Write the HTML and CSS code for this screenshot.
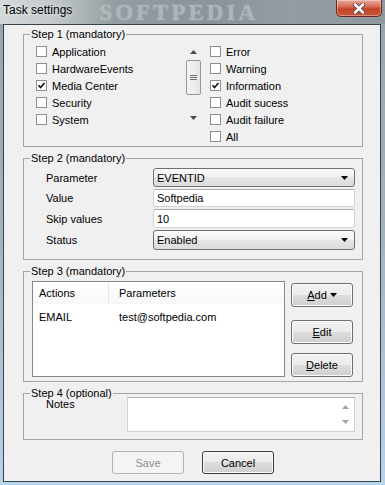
FILE: index.html
```html
<!DOCTYPE html>
<html lang="en">
  <head>
    <meta charset="UTF-8" />
    <meta name="viewport" content="width=device-width, initial-scale=1.0" />
    <title>Task settings</title>
    <link rel="stylesheet" href="styles.css">
  </head>
  <body>
    <div class="window">
      <div class="titlebar">
        <span class="title">Task settings</span>
        <span class="watermark">SOFTPEDIA</span>
        <button class="close-button" aria-label="Close">
          <svg width="14" height="11" viewBox="0 0 14 11">
            <path d="M3 1.5 L11 9.5 M11 1.5 L3 9.5" stroke="#5b3a36" stroke-width="4.2" stroke-linecap="round" fill="none" />
            <path d="M3 1.5 L11 9.5 M11 1.5 L3 9.5" stroke="#ffffff" stroke-width="2.6" stroke-linecap="round" fill="none" />
          </svg>
        </button>
      </div>

      <div class="client">
        <!-- Step 1 -->
        <fieldset class="group">
          <legend>Step 1 (mandatory)</legend>
          <div class="step1-body">
            <div class="checklist checklist-left">
              <div class="check-row"><span class="box"></span>Application</div>
              <div class="check-row"><span class="box"></span>HardwareEvents</div>
              <div class="check-row">
                <span class="box">
                  <svg width="9" height="9" viewBox="0 0 9 9"><path d="M1.5 4.3 L3.5 6.6 L7.5 2" stroke="#111" stroke-width="1.6" fill="none" /></svg>
                </span>Media Center
              </div>
              <div class="check-row"><span class="box"></span>Security</div>
              <div class="check-row"><span class="box"></span>System</div>
            </div>

            <div class="vscroll">
              <div class="scroll-arrow">
                <svg width="7" height="4" viewBox="0 0 7 4"><polygon points="0,4 3.5,0 7,4" fill="#4a4a4a" /></svg>
              </div>
              <div class="scroll-thumb">
                <span class="grip"></span><span class="grip"></span><span class="grip"></span>
              </div>
              <div class="scroll-track"></div>
              <div class="scroll-arrow">
                <svg width="7" height="4" viewBox="0 0 7 4"><polygon points="0,0 7,0 3.5,4" fill="#4a4a4a" /></svg>
              </div>
            </div>

            <div class="checklist checklist-right">
              <div class="check-row"><span class="box"></span>Error</div>
              <div class="check-row"><span class="box"></span>Warning</div>
              <div class="check-row">
                <span class="box">
                  <svg width="9" height="9" viewBox="0 0 9 9"><path d="M1.5 4.3 L3.5 6.6 L7.5 2" stroke="#111" stroke-width="1.6" fill="none" /></svg>
                </span>Information
              </div>
              <div class="check-row"><span class="box"></span>Audit sucess</div>
              <div class="check-row"><span class="box"></span>Audit failure</div>
              <div class="check-row"><span class="box"></span>All</div>
            </div>
          </div>
        </fieldset>

        <!-- Step 2 -->
        <fieldset class="group">
          <legend>Step 2 (mandatory)</legend>
          <div class="step2-body">
            <span class="field-label">Parameter</span>
            <div class="combo">
              <span>EVENTID</span>
              <svg width="7" height="4" viewBox="0 0 7 4"><polygon points="0,0 7,0 3.5,4" fill="#000" /></svg>
            </div>
            <span class="field-label">Value</span>
            <div class="edit">Softpedia</div>
            <span class="field-label">Skip values</span>
            <div class="edit">10</div>
            <span class="field-label">Status</span>
            <div class="combo">
              <span>Enabled</span>
              <svg width="7" height="4" viewBox="0 0 7 4"><polygon points="0,0 7,0 3.5,4" fill="#000" /></svg>
            </div>
          </div>
        </fieldset>

        <!-- Step 3 -->
        <fieldset class="group">
          <legend>Step 3 (mandatory)</legend>
          <div class="step3-body">
            <div class="listview">
              <div class="lv-header">
                <div class="lv-col lv-col-first">Actions</div>
                <div class="lv-col lv-col-second">Parameters</div>
              </div>
              <div class="lv-row">
                <div class="lv-col lv-col-first">EMAIL</div>
                <div class="lv-col lv-col-second">test@softpedia.com</div>
              </div>
            </div>
            <div class="side-buttons">
              <button class="btn btn-add">
                <span><u>A</u>dd</span>
                <svg width="7" height="4" viewBox="0 0 7 4"><polygon points="0,0 7,0 3.5,4" fill="#000" /></svg>
              </button>
              <button class="btn btn-edit"><span><u>E</u>dit</span></button>
              <button class="btn btn-delete"><span><u>D</u>elete</span></button>
            </div>
          </div>
        </fieldset>

        <!-- Step 4 -->
        <fieldset class="group">
          <legend>Step 4 (optional)</legend>
          <div class="step4-body">
            <span class="notes-label">Notes</span>
            <div class="notes">
              <div class="notes-scroll">
                <svg width="7" height="4" viewBox="0 0 7 4"><polygon points="0,4 3.5,0 7,4" fill="#a3a3a3" /></svg>
                <svg width="7" height="4" viewBox="0 0 7 4"><polygon points="0,0 7,0 3.5,4" fill="#a3a3a3" /></svg>
              </div>
            </div>
          </div>
        </fieldset>

        <div class="dialog-buttons">
          <button class="btn btn-save" disabled>Save</button>
          <button class="btn btn-cancel">Cancel</button>
        </div>
      </div>
    </div>
  </body>
</html>
```

FILE: styles.css
```css
/* Base */
* {
  box-sizing: border-box;
  margin: 0;
  padding: 0;
}

body {
  width: 385px;
  height: 485px;
  overflow: hidden;
  font-family: "Liberation Sans", Arial, sans-serif;
  font-size: 11px;
  color: #000;
}

button {
  font-family: inherit;
  font-size: 11px;
  color: #000;
}

/* Window frame */
.window {
  height: 485px;
  background: linear-gradient(
    to bottom,
    #9aa4a9 0%,
    #a3b0b9 45%,
    #b3cbe3 90%,
    #b8d3ee 100%
  );
}

.titlebar {
  height: 24px;
  display: flex;
  align-items: flex-start;
  background: linear-gradient(
    to right,
    #d4d8da 0%,
    #c2c8cb 14%,
    #939ca0 30%,
    #8a9397 55%,
    #939da1 75%,
    #8e999e 100%
  );
}

.title {
  margin: 3px 0 0 3px;
  font-size: 12px;
  line-height: 14px;
  white-space: nowrap;
  text-shadow: 0 0 6px rgba(255, 255, 255, 0.9);
}

.watermark {
  margin: 1px 0 0 27px;
  font-family: "Liberation Serif", serif;
  font-weight: bold;
  font-size: 23px;
  line-height: 23px;
  letter-spacing: 3px;
  color: #b7c0c4;
  opacity: 0.75;
  white-space: nowrap;
  text-shadow: 0 0 2px #b7c0c4;
}

.close-button {
  margin-left: auto;
  margin-right: 3px;
  width: 46px;
  height: 17px;
  flex-shrink: 0;
  display: flex;
  align-items: center;
  justify-content: center;
  border: 1px solid #6b2a1f;
  border-top: none;
  border-radius: 0 0 5px 5px;
  background: linear-gradient(
    to bottom,
    #e9a99a 0%,
    #d8705a 40%,
    #c2452b 55%,
    #c95337 100%
  );
  box-shadow: inset 0 0 0 1px rgba(255, 255, 255, 0.35);
}

/* Client area */
.client {
  margin: 0 4px 0 3px;
  height: 458px;
  padding: 3px 17px 0 19px;
  background-color: #f0f0f0;
  border: 1px solid #37434a;
}

/* Group boxes */
.group {
  border: 1px solid #a5a5a5;
  min-width: 0;
}

.group + .group {
  margin-top: 5px;
}

.group legend {
  margin-left: 6px;
  padding: 0 1px;
  line-height: 13px;
}

/* Step 1 */
.step1-body {
  height: 105px;
  padding: 2px 0 0 11px;
  display: flex;
  align-items: flex-start;
}

.checklist-left {
  width: 150px;
  padding-left: 1px;
}

.checklist-right {
  margin-left: 8px;
}

.check-row {
  height: 17px;
  display: flex;
  align-items: center;
  white-space: nowrap;
}

.box {
  width: 11px;
  height: 11px;
  margin-right: 5px;
  border: 1px solid #8e8f8f;
  background-color: #fff;
  display: flex;
  align-items: center;
  justify-content: center;
}

.vscroll {
  width: 17px;
  height: 83px;
  display: flex;
  flex-direction: column;
  align-items: center;
}

.scroll-arrow {
  height: 17px;
  width: 100%;
  display: flex;
  align-items: center;
  justify-content: center;
}

.scroll-thumb {
  width: 15px;
  height: 35px;
  border: 1px solid #979797;
  border-radius: 2px;
  background: linear-gradient(to right, #f5f5f5, #e4e4e4);
  display: flex;
  flex-direction: column;
  align-items: center;
  justify-content: center;
  gap: 1px;
}

.grip {
  width: 7px;
  height: 1px;
  background-color: #6f6f6f;
}

.scroll-track {
  flex: 1;
}

/* Step 2 */
.step2-body {
  padding: 3px 7px 9px 22px;
  display: grid;
  grid-template-columns: 107px 202px;
  grid-template-rows: 19px 18px 19px 20px;
  row-gap: 2px;
  align-items: stretch;
}

.field-label {
  align-self: center;
}

.combo {
  display: flex;
  align-items: center;
  justify-content: space-between;
  padding: 0 6px 0 3px;
  border: 1px solid #707070;
  border-radius: 3px;
  background: linear-gradient(
    to bottom,
    #fbfbfb 0%,
    #f1f1f1 50%,
    #e6e6e6 50%,
    #dcdcdc 100%
  );
}

.edit {
  display: flex;
  align-items: center;
  padding-left: 3px;
  background-color: #fff;
  border: 1px solid #d0d3d8;
  border-top-color: #abadb3;
  border-radius: 2px;
}

/* Step 3 */
.step3-body {
  padding: 3px 8px 4px 8px;
  display: flex;
  gap: 6px;
}

.listview {
  width: 253px;
  height: 96px;
  background-color: #fff;
  border: 1px solid #828790;
}

.lv-header {
  height: 22px;
  display: flex;
  align-items: center;
  background: linear-gradient(to bottom, #ffffff, #f6f7f8);
}

.lv-col-first {
  width: 76px;
  padding-left: 6px;
}

.lv-col-second {
  padding-left: 10px;
}

.lv-header .lv-col-first {
  height: 100%;
  display: flex;
  align-items: center;
  border-right: 1px solid #e3e5e7;
}

.lv-row {
  margin-top: 4px;
  height: 17px;
  display: flex;
  align-items: center;
}

.side-buttons {
  display: flex;
  flex-direction: column;
}

/* Buttons */
.btn {
  height: 24px;
  border: 1px solid #707070;
  border-radius: 3px;
  background: linear-gradient(
    to bottom,
    #f2f2f2 0%,
    #ebebeb 50%,
    #dddddd 50%,
    #cfcfcf 100%
  );
  box-shadow: inset 0 0 0 1px #fbfbfb;
  display: flex;
  align-items: center;
  justify-content: center;
}

.side-buttons .btn {
  width: 62px;
}

.btn-add {
  margin-top: 2px;
  gap: 3px;
}

.btn-edit {
  margin-top: 13px;
}

.btn-delete {
  margin-top: 9px;
}

/* Step 4 */
.step4-body {
  margin-top: -3px;
  padding: 0 7px 7px 22px;
  display: flex;
}

.notes-label {
  width: 81px;
  margin-top: 1px;
  line-height: 13px;
}

.notes {
  width: 228px;
  height: 35px;
  background-color: #fff;
  border: 1px solid #d0d3d8;
  border-top-color: #abadb3;
  display: flex;
  justify-content: flex-end;
}

.notes-scroll {
  width: 17px;
  display: flex;
  flex-direction: column;
  align-items: center;
  justify-content: space-between;
  padding: 7px 0 7px;
}

/* Dialog buttons */
.dialog-buttons {
  margin-top: 11px;
  display: flex;
  justify-content: center;
  gap: 18px;
}

.dialog-buttons .btn {
  height: 23px;
  width: 72px;
}

.btn-save {
  color: #8d8d8d;
  border-color: #adb2b5;
  background: #f4f4f4;
  box-shadow: none;
}

.btn-cancel {
  width: 73px;
  border-color: #3c3c3c;
}
```
